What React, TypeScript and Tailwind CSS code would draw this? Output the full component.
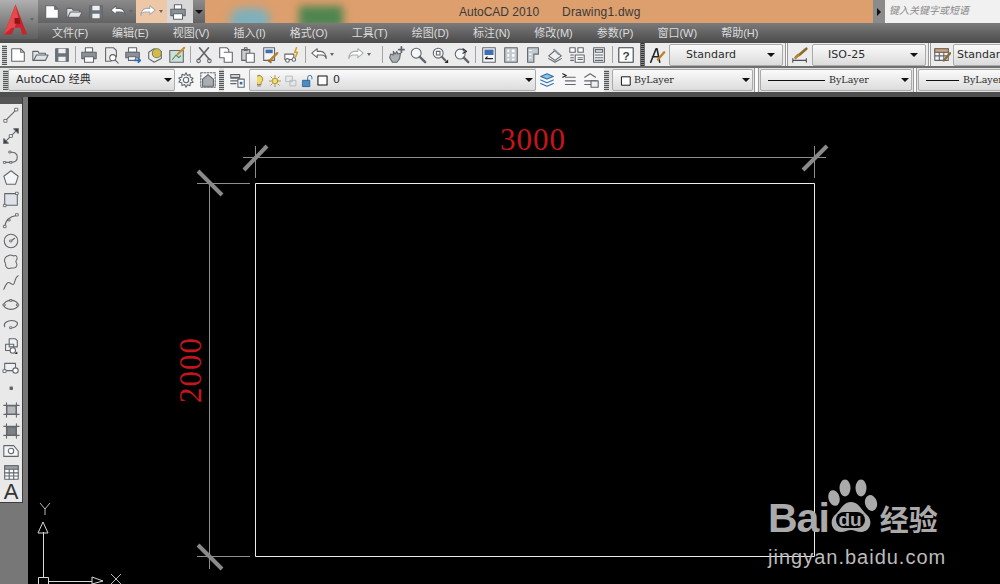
import type { ReactNode } from "react";

const ui = "font-['Liberation_Sans','Noto_Sans_CJK_SC',sans-serif]";
const S = "#62666b";
const B = "#2f6fb0";

const Svg = ({ children, size = 18 }: { children: ReactNode; size?: number }) => (
  <svg width={size} height={size} viewBox="0 0 20 20" fill="none" stroke={S} strokeWidth="1.2" strokeLinejoin="round" strokeLinecap="round">
    {children}
  </svg>
);

const icons: Record<string, ReactNode> = {
  new: <path d="M3 3h10l4 4v10H3z M13 3v4h4" fill="#fff" />,
  open: <path d="M2 6h6l1 2h7v2H6l-3 6H2z M3 16l3-6h13l-3 6z" fill="#dfe3e6" />,
  save: <><path d="M3 3h14v14H3z" fill="#6b737b" /><path d="M6 3h8v5H6zM6 12h8v5H6z" fill="#f0f0f0" stroke="none" /></>,
  print: <><path d="M6 2h8v5H6z" fill="#fff" /><path d="M2 7h16v7H2z" fill="#8a9198" /><path d="M5 12h10v6H5z" fill="#fff" /></>,
  preview: <><path d="M4 2h9l3 3v7M4 2v15h6" /><circle cx="12" cy="13" r="3.4" fill="#fff" /><path d="M14.500 15.500L18 19" /></>,
  plot: <><path d="M5 2h9v5H5z" fill="#fff" /><path d="M2 7h15v6H2z" fill="#8a9198" /><path d="M5 12h8v4H5z" fill="#fff" /><path d="M12 16h6m-2-2l2 2-2 2" stroke={B} strokeWidth="2" /></>,
  cube: <><path d="M9 3l8 3v8l-8 4-6-4V7z" /><circle cx="12" cy="8" r="5" fill="#d9b84b" stroke="#6d8a52" /></>,
  sheet: <><path d="M2 5h15v13H2z" fill="#cfe0d8" /><path d="M5 15l4-5 3 3 2-2" stroke="#4f8a6c" /><path d="M11 9l7-7" stroke="#c8902c" strokeWidth="2.4" /></>,
  cut: <><path d="M5 2l11 13M15 2L4 15" strokeWidth="1.8" /><circle cx="4" cy="16.500" r="2" /><circle cx="16" cy="16.500" r="2" /></>,
  copy: <path d="M3 2h8l2 2v3h4v11H8v-5H3z M8 7h5" fill="#fff" />,
  paste: <><path d="M3 4h9v12H3z" fill="#c9cdd1" /><path d="M6 2h3v3H6z" /><path d="M8 8h9v10H8z" fill="#fff" /></>,
  match: <><path d="M3 2h12v14H3z" fill="#f3f5f7" /><path d="M5 4h8v4H5z" fill="#3f6fb0" stroke="none" /><path d="M18 8l-8 8" stroke="#b8822c" strokeWidth="2.6" /><path d="M8 16l3 2" stroke="#8c6a2c" strokeWidth="2" /></>,
  block: <><path d="M2 9h10v6H2z" fill="#fff" /><circle cx="5" cy="16" r="2" fill="#fff" /><circle cx="12" cy="15" r="2" fill="#fff" /><path d="M15 2l-2 5h3l-2 5" stroke="#d4a12b" strokeWidth="1.8" /></>,
  undo: <path d="M8 3L2 8l6 5v-3h5c2 0 4 1 5 4 0-5-3-8-6-8H8z" fill="#fff" />,
  redo: <path d="M12 3l6 5-6 5v-3H7c-2 0-4 1-5 4 0-5 3-8 6-8h4z" fill="#fff" stroke="#a8adb2" />,
  pan: <><path d="M4 9l3 1V6l2 3 2-3 1 3 3-1-1 6-3 4H6l-3-5z" fill="#aab0b5" /><path d="M13 4h6M16 1v6" strokeWidth="2" /></>,
  zoom: <><circle cx="8" cy="8" r="5.500" fill="#f5f8fb" /><path d="M12 12l6 6" strokeWidth="2.6" /></>,
  zoomw: <><circle cx="8" cy="8" r="5.500" fill="#f5f8fb" /><path d="M6 6h4v4H6z" /><path d="M12 12l4 4" strokeWidth="2.4" /><path d="M15 19l4-4v4z" fill="#222" stroke="none" /></>,
  zoomp: <><circle cx="8" cy="9" r="5.500" fill="#f5f8fb" /><path d="M12 13l5 5" strokeWidth="2.6" /><path d="M11 3l4 3-4 2" stroke="#222" /></>,
  props: <><path d="M3 2h14v16H3z" fill="#f5f7f9" /><path d="M5 4h10v6H5z" fill="#3f6fb0" stroke="none" /><path d="M6 14h8m-8 0l2-2" stroke="#222" /></>,
  center: <><path d="M3 2h14v16H3z" fill="#c3cad0" /><path d="M6 4h2v3H6zM11 4h3v3h-3zM6 9h2v3H6zM11 9h3v3h-3zM6 14h2v2H6zM11 14h3v2h-3z" fill="#fff" stroke="none" /></>,
  palette: <><path d="M4 2h12v7h-5v9H4z" fill="#c3cad0" /><path d="M6 5h2M6 9h2M6 13h2" stroke="#fff" /></>,
  sheetset: <><path d="M3 11l7-6 7 6-7 5z" fill="#eef1f3" /><path d="M3 14l7 4 7-4" /><path d="M9 4l5 5" stroke="#8c9298" strokeWidth="2" /></>,
  marks: <><path d="M2 2h6v5H2zM11 2h6v5h-6zM8 10h10v8H8z" fill="#fff" /><path d="M3 10h3M3 13h3M3 16h3M11 13h5M11 15h5" /></>,
  calc: <><path d="M4 2h12v16H4z" fill="#eef1f3" /><path d="M6 4h8v3H6z" /><path d="M6 10h8M6 13h8M6 16h8" strokeDasharray="2 1" /></>,
  help: <><path d="M2 2h16v16H2z" fill="#fff" stroke="#3d4247" /><text x="10" y="15" textAnchor="middle" fontSize="13" fontWeight="700" fill="#3d4247" stroke="none" fontFamily="Liberation Sans">?</text></>,
  textStyle: <><path d="M3 18L9 3h1l3 15M5 12h7" stroke="#23272b" strokeWidth="1.8" /><path d="M18 7l-7 8" stroke="#b8822c" strokeWidth="2.6" /></>,
  dimStyle: <><path d="M2 14v4M17 14v4M2 16h15" stroke="#4b5056" /><path d="M17 3L9 10" stroke="#8c6a2c" strokeWidth="3" /><path d="M8 10l-3 3" stroke="#b8822c" strokeWidth="3" /></>,
  tableStyle: <><path d="M2 3h15v13H2z" fill="#f2f4f6" /><path d="M2 7h15M7 7v9M12 7v9M2 11h15" /><path d="M2 3h15v4H2z" fill="#d9a06e" /><path d="M19 8l-7 8" stroke="#8c6a2c" strokeWidth="2.6" /></>,
  gear: <><circle cx="10" cy="10" r="3" /><path d="M10 2l1.500 3 3-1.200.2 3.200 3.300 1-2 2 2 2.400-3.300.8-.2 3.200-3-1.200L10 18l-1.500-3-3 1.200-.2-3.200-3.300-.8 2-2.400-2-2 3.300-1 .2-3.200 3 1.200z" /></>,
  house: <><path d="M2 2h16v16H2z" strokeDasharray="2 1.500" /><path d="M4 17V9l6-5 6 5v8z" fill="#a8aeb4" /></>,
  layers: <><path d="M3 4h10v3H3zM3 8h10M3 11h10M3 14h6" /><path d="M11 9h7v9h-7z" fill="#fff" /><path d="M13 12h3v3h-3z" fill="#2f6fb0" stroke="none" /></>,
  bulb: <><path d="M10 2a5.500 5.500 0 0 1 3 10v3H7v-3a5.500 5.500 0 0 1 3-10z" fill="#f4dc6a" stroke="#8d7a30" /><path d="M8 17h4" /></>,
  sun: <><circle cx="10" cy="10" r="4" fill="#f4dc6a" stroke="#a08c30" /><path d="M10 2v3M10 15v3M2 10h3M15 10h3M4 4l2 2M14 14l2 2M4 16l2-2M14 6l2-2" stroke="#a08c30" /></>,
  freeze: <><path d="M3 3h9v8H3z" stroke="#b0b4b8" fill="#e8eaec" /><path d="M9 9h8v8H9z" stroke="#b0b4b8" /></>,
  lock: <><path d="M4 9h10v9H4z" fill="#4a8cc4" stroke="#2a5a8c" /><path d="M11 9V5a3 3 0 0 1 6 0v2" stroke="#2a5a8c" /></>,
  square: <path d="M3 3h14v14H3z" fill="#fff" stroke="#111" strokeWidth="1.6" />,
  stack: <><path d="M3 6l7-3 7 3-7 3z" fill="#8fc4dc" stroke="#2f6fb0" /><path d="M3 10l7 3 7-3M3 14l7 3 7-3" stroke="#2f6fb0" /></>,
  stackPrev: <><path d="M6 7h11M6 11h11M6 15h11" /><path d="M3 3l4 2-4 2" stroke="#222" /></>,
  stackIso: <><path d="M3 7l6-4 6 4M3 11h13M3 15h7" /><path d="M10 11h8v7h-8z" fill="#eef1f3" /></>,
};

const drawIcons: ReactNode[] = [
  <><path d="M4 16L16 4" /><path d="M2.500 15h3v3h-3zM14.500 2.500h3v3h-3z" fill="#fff" strokeWidth="1" /></>,
  <><path d="M2 18L18 2" /><path d="M13 2h5v5z M2 13v5h5z" fill="#2d3136" /><path d="M8.500 8.500h3v3h-3z" fill="#fff" strokeWidth="1" /></>,
  <><path d="M3 16h7c5 0 7-3 7-6 0-4-4-6-8-5" /><path d="M2 15h2v2H2zM9 15h2v2H9zM8 3.500h2v2H8z" fill="#fff" strokeWidth="1" /></>,
  <path d="M10 2l8 6-3 9H5L2 8z" fill="#f3f5f7" />,
  <><path d="M3 4h14v13H3z" fill="#dfe2e8" /><path d="M2 16h2.500v2.500H2zM15.500 2.500H18V5h-2.500z" fill="#fff" strokeWidth="1" /></>,
  <><path d="M3 17c1-7 6-11 13-12" /><path d="M2 16h2.500v2.500H2zM15.500 3H18v2.500h-2.500zM7 9h2v2H7z" fill="#fff" strokeWidth="1" /></>,
  <><circle cx="10" cy="10" r="7.500" /><path d="M10 10l4-3" /><path d="M9 9h2v2H9z" fill="#fff" strokeWidth="1" /></>,
  <path d="M7 3c3-2 5 1 7 0s4 3 2 5 2 4 0 7-5 1-7 2-5-1-5-4-2-3-1-6 2-3 4-4z" strokeDasharray="3 .8" />,
  <path d="M2 17c2-5 4-9 7-7s4 3 5-1 2-6 4-7" />,
  <><ellipse cx="10" cy="11" rx="8" ry="5" /><path d="M9 5h2v2H9zM1.500 10h2v2h-2zM16.500 10h2v2h-2z" fill="#fff" strokeWidth="1" /></>,
  <><path d="M3 12c-2-4 3-7 8-7s8 3 5 6c-1 1-3 2-4 2" /><path d="M9 12h2v2H9z" fill="#fff" strokeWidth="1" /></>,
  <><path d="M8 2h7l2 2v7H8zM4 8h9v7H4z" fill="#eef1f3" /><circle cx="12" cy="15" r="3" fill="#fff" /><path d="M17 16v3h-3z" fill="#222" stroke="none" /></>,
  <><path d="M3 6h12v8H3z" fill="#eef1f3" /><path d="M1.500 13h3v3h-3z" fill="#fff" strokeWidth="1" /><circle cx="15" cy="14" r="3" fill="#fff" /></>,
  <path d="M9 9h2.500v2.500H9z" fill="#555" />,
  <><path d="M5 3v16M16 3v16M2 6h17M2 16h17" /><path d="M5.500 6.500h10v9h-10z" fill="#b4b8bc" strokeDasharray="1 1" /></>,
  <><path d="M5 3v16M16 3v16M2 6h17M2 16h17" /><path d="M5.500 6.500h10v9h-10z" fill="#7c8186" /></>,
  <><path d="M2 4h11l5 6v6H2z" fill="#f3f5f7" /><circle cx="10" cy="10" r="3" fill="#fff" /></>,
  <><path d="M3 3h15v15H3z" fill="#fff" /><path d="M3 3h15v4H3z" fill="#9aa0a6" /><path d="M3 11h15M3 14.500h15M8 7v11M13 7v11" /></>,
];

const Btn = ({ name, w = "w-[22px]" }: { name: string; w?: string }) => (
  <div className={`${w} h-full shrink-0 flex items-center justify-center`}>
    <Svg>{icons[name]}</Svg>
  </div>
);

const Sep = () => <div className="w-px h-[17px] mx-[2px] bg-[#a2a5a8] shrink-0" />;

const Grip = () => (
  <div className="w-[5px] h-[20px] shrink-0 bg-[repeating-linear-gradient(0deg,#55585b_0_1px,#c4c6c8_1px_2px)]" />
);

const Caret = () => <div className="w-0 h-0 border-x-[4px] border-x-transparent border-t-[4px] border-t-[#111] shrink-0" />;

const Tiny = () => <div className="w-0 h-0 border-x-[2px] border-x-transparent border-t-[3px] border-t-[#666] shrink-0" />;

const Combo = ({ w, children, serif, tight, flush }: { w: string; children: ReactNode; serif?: boolean; tight?: boolean; flush?: boolean }) => (
  <div className={`${w} h-[22px] shrink-0 rounded-[2px] border border-[#a9abad] bg-gradient-to-b from-[#fafafa] to-[#dcdcdc] flex items-center text-[#2c2c2c] ${flush ? "pl-[3px]" : "pl-[7px]"} ${tight ? "pr-[2px]" : "pr-[7px]"} ${serif ? "text-[9.500px] font-['DejaVu_Serif',serif]" : "text-[11px] font-['DejaVu_Sans','Noto_Sans_CJK_SC',sans-serif]"}`}>
    <div className="flex-1 min-w-0 pt-px flex items-center gap-[2px] whitespace-nowrap overflow-hidden">{children}</div>
    <Caret />
  </div>
);

const Panel = ({ children, className = "" }: { children: ReactNode; className?: string }) => (
  <div className={`h-full flex items-center shrink-0 bg-[#ececec] ${className}`}>{children}</div>
);

const Logo = () => (
  <svg width="25" height="33" viewBox="0 0 26 33">
    <path d="M13 1L1 32h8l3-7h6l2 7h5z" fill="#c9242b" />
    <path d="M13 1l3 14-4 10H9L1 32z" fill="#e6484c" />
    <path d="M12 15h5l1 6h-6z" fill="#8e1519" />
  </svg>
);

const Paw = () => (
  <svg width="60" height="62" viewBox="0 0 60 62" fill="#aaaaaa">
    <ellipse cx="6" cy="19" rx="5.500" ry="8" transform="rotate(-15 6 19)" />
    <ellipse cx="17" cy="9" rx="5.500" ry="8.500" />
    <ellipse cx="33" cy="9" rx="5.500" ry="8.500" />
    <ellipse cx="43" cy="24" rx="6" ry="8" transform="rotate(-15 43 24)" />
    <path d="M23 23c8 0 10 8 16 13 6 5 4 17-6 17-4 0-7-2-10-2s-6 2-10 2C3 53 1 41 7 36c6-5 8-13 16-13z" />
    <rect x="8" y="33" width="29" height="16" rx="8" fill="#000" />
    <text x="22" y="47" textAnchor="middle" fontSize="19" fontWeight="700" fill="#aaaaaa" fontFamily="Liberation Sans">du</text>
  </svg>
);

const Drawing = () => (
  <svg className="absolute inset-0 w-full h-full" viewBox="28 97 972 487">
    <g stroke="#8e8e8e" strokeWidth="1" fill="none">
      <path d="M243 157.500H826M255.500 146V178M814.500 146V178M209.500 183V569M197 183.500H250M197 556.500H250" />
    </g>
    <path d="M255.500 183.500H814.500V556.500H255.500z" stroke="#ececec" fill="none" />
    <g stroke="#8a8a8a" strokeWidth="4">
      <path d="M244 170L267 146M803 170L827 146M198 171L222 195M198 545L222 569" />
    </g>
    <g stroke="#d8d8d8" strokeWidth="1" fill="none">
      <path d="M43.500 577V532M48 581.500H92" />
      <path d="M43 522L38 533H48z M92 577L103 581L92 584z" />
      <path d="M38.500 577.500H48.500V590H38.500z" />
      <path d="M40 503L45 509L50 503M45 509V515M111 574L121 584M121 574L111 584" stroke="#b9b9b9" />
    </g>
    <text x="533" y="150" textAnchor="middle" fill="#c3161c" fontSize="31" letterSpacing="1" fontFamily="Liberation Serif">3000</text>
    <text transform="translate(201 370) rotate(-90)" textAnchor="middle" fill="#c3161c" fontSize="31" letterSpacing="1" fontFamily="Liberation Serif">2000</text>
  </svg>
);

export default function App() {
  const menu = ["文件(F)", "编辑(E)", "视图(V)", "插入(I)", "格式(O)", "工具(T)", "绘图(D)", "标注(N)", "修改(M)", "参数(P)", "窗口(W)", "帮助(H)"];

  return (
    <div className={`${ui} w-[1000px] h-[584px] overflow-hidden flex flex-col bg-[#6f6f6f]`}>
      {/* title + menu, logo button sits across both */}
      <div className="relative shrink-0">
        <div className="absolute left-0 top-0 w-[38px] h-[39px] flex items-center pl-[3px] gap-[2px] bg-gradient-to-b from-[#b0b0b0] to-[#5f5f5f] z-10">
          <Logo />
          <Tiny />
        </div>
        <div className="h-[23px] flex bg-[#dd9f6d]">
          <div className="w-[38px] shrink-0" />
          <div className="w-[167px] shrink-0 flex items-center bg-gradient-to-b from-[#8b8b8b] to-[#636363]">
            <div className="flex items-center pl-[3px] h-full">
              <Btn name="new" />
              <Btn name="open" />
              <Btn name="save" />
              <Btn name="undo" />
              <Tiny />
            </div>
            <div className="flex items-center h-full w-[31px] ml-[3px] bg-[#eec8a6] pl-[1px]">
              <Btn name="redo" />
              <Tiny />
            </div>
            <div className="h-full w-[26px] bg-[#d8d8d8] flex items-center">
              <Btn name="print" />
            </div>
            <div className="ml-[2px]"><Caret /></div>
          </div>
          <div className="relative flex-1 overflow-hidden flex text-[12px] text-[#3a3a3a]">
            <div className="absolute left-[25px] top-[8px] w-[40px] h-[24px] rounded-full bg-[#7fb0bb] blur-[4px]" />
            <div className="absolute left-[94px] top-[6px] w-[44px] h-[22px] bg-[#4e8550] blur-[4px]" />
            <div className="w-[254px] shrink-0" />
            <div className="pt-[3px] whitespace-nowrap">AutoCAD 2010</div>
            <div className="pt-[3px] pl-[23px] tracking-[0.2px] whitespace-nowrap">Drawing1.dwg</div>
          </div>
          <div className="w-[127px] shrink-0 flex bg-[#8b8b8b]">
            <div className="w-[12px] flex items-center justify-center">
              <div className="w-0 h-0 border-y-[4px] border-y-transparent border-l-[4px] border-l-[#111]" />
            </div>
            <div className="flex-1 bg-[#f1f1f1] pl-[4px] pt-[3px] text-[10px] italic text-[#8a8a8a] whitespace-nowrap overflow-hidden">键入关键字或短语</div>
          </div>
        </div>
        <div className="h-[20px] pl-[52px] flex items-center gap-[24px] bg-gradient-to-b from-[#7b7b7b] to-[#4b4b4b] text-[11px] text-[#dcdcdc] whitespace-nowrap">
          {menu.map((m) => <span key={m}>{m}</span>)}
        </div>
      </div>

      {/* standard toolbar */}
      <div className="h-[23px] shrink-0 flex items-center bg-[#6e6e6e] text-[#333] overflow-hidden">
        <Panel className="w-[640px] pl-[2px]">
          <Grip />
          <Btn name="new" />
          <Btn name="open" />
          <Btn name="save" />
          <Sep />
          <Btn name="print" />
          <Btn name="preview" />
          <Btn name="plot" />
          <Btn name="cube" />
          <Btn name="sheet" />
          <Sep />
          <Btn name="cut" />
          <Btn name="copy" />
          <Btn name="paste" />
          <Btn name="match" />
          <Btn name="block" />
          <Sep />
          <Btn name="undo" />
          <Tiny />
          <div className="w-[11px]" />
          <Btn name="redo" />
          <Tiny />
          <div className="w-[9px]" />
          <Sep />
          <Btn name="pan" />
          <Btn name="zoom" />
          <Btn name="zoomw" />
          <Btn name="zoomp" />
          <Sep />
          <Btn name="props" />
          <Btn name="center" />
          <Btn name="palette" />
          <Btn name="sheetset" />
          <Btn name="marks" />
          <Btn name="calc" />
          <Sep />
          <Btn name="help" />
        </Panel>
        <div className="w-[3px] mx-[1px] h-full bg-[repeating-linear-gradient(0deg,#333_0_1px,#888_1px_2px)] shrink-0" />
        <Panel className="flex-1 pl-[1px] gap-[1px]">
          <Btn name="textStyle" />
          <Combo w="w-[114px]"><span className="pl-[9px]">Standard</span></Combo>
          <div className="w-[3px] h-full bg-[#fafafa] border-x border-[#9a9a9a] ml-[1px]" />
          <Btn name="dimStyle" />
          <Combo w="w-[114px]"><span className="pl-[8px]">ISO-25</span></Combo>
          <div className="w-[3px] h-full bg-[#fafafa] border-x border-[#9a9a9a] ml-[1px]" />
          <Btn name="tableStyle" w="w-[20px]" />
          <Combo w="w-[70px]" flush>Standard</Combo>
        </Panel>
      </div>

      <div className="h-[2px] shrink-0" />

      {/* workspace + layer toolbar */}
      <div className="h-[24px] shrink-0 flex items-center pl-[3px] bg-[#e3e3e3] overflow-hidden">
        <Grip />
        <Combo w="w-[167px]" tight><span>AutoCAD 经典</span></Combo>
        <div className="h-full w-[44px] shrink-0 flex items-center bg-[#f6f6f6]">
          <Btn name="gear" />
          <Btn name="house" />
        </div>
        <Grip />
        <div className="h-full w-[25px] shrink-0 bg-[#f4f4f4] flex items-center justify-center"><Btn name="layers" /></div>
        <Combo w="w-[287px]" tight>
          <div className="-ml-[5px] flex items-center gap-[2px]">
            <Svg size={14}>{icons.bulb}</Svg>
            <Svg size={14}>{icons.sun}</Svg>
            <Svg size={14}>{icons.freeze}</Svg>
            <Svg size={14}>{icons.lock}</Svg>
            <Svg size={13}>{icons.square}</Svg>
          </div>
          <span className="text-[11px] pl-[2px]">0</span>
        </Combo>
        <div className="h-full w-[68px] shrink-0 flex items-center bg-[#f6f6f6]">
          <Btn name="stack" />
          <Btn name="stackPrev" />
          <Btn name="stackIso" />
        </div>
        <Grip />
        <div className="w-[3px] shrink-0" />
        <Combo w="w-[141px]" serif tight>
          <Svg size={12}>{icons.square}</Svg>
          ByLayer
        </Combo>
        <div className="w-[5px] h-full mx-[1px] bg-[#fafafa] border-x border-[#9a9a9a] shrink-0" />
        <Combo w="w-[152px]" serif tight>
          <div className="w-[57px] h-px bg-[#111] mr-[2px] shrink-0" />
          ByLayer
        </Combo>
        <div className="w-[4px] h-full mx-[1px] bg-[#fafafa] border-x border-[#9a9a9a] shrink-0" />
        <Combo w="w-[110px]" serif tight>
          <div className="w-[33px] h-px bg-[#111] mr-[2px] shrink-0" />
          ByLayer
        </Combo>
      </div>

      <div className="h-[5px] shrink-0 bg-[#4e4e4e]" />

      <div className="flex-1 min-h-0 flex">
        <div className="w-[28px] shrink-0 flex flex-col bg-[#777777]">
          <div className="w-[23px] h-[406px] bg-[#e9e9e9] border-r border-[#3c3c3c] border-b flex flex-col items-center">
            <div className="w-full h-[7px] bg-[#555] shrink-0" />
            {drawIcons.map((ic, i) => (
              <div key={i} className="h-[21px] shrink-0 flex items-center justify-center"><Svg>{ic}</Svg></div>
            ))}
            <div className="text-[22px] leading-[20px] text-[#333]">A</div>
          </div>
        </div>
        <div className="relative flex-1 bg-black overflow-hidden">
          <Drawing />
          {/* watermark */}
          <div className="absolute left-[740px] top-[380px] text-[#aaaaaa] w-[190px]">
            <div className="flex items-end h-[59px]">
              <span className="text-[41px] leading-[44px] font-bold tracking-[-1px] mb-[-4px]">Bai</span>
              <div className="mb-[-5px] ml-[-1px]"><Paw /></div>
              <span className="text-[29px] leading-[30px] font-bold ml-[-8px] mb-[3px] font-['Noto_Sans_CJK_SC',sans-serif]">经验</span>
            </div>
            <div className="mt-[9px] text-[20px] leading-[24px] text-[#bcbcbc] tracking-[1px] whitespace-nowrap">jingyan.baidu.com</div>
          </div>
        </div>
      </div>
    </div>
  );
}
